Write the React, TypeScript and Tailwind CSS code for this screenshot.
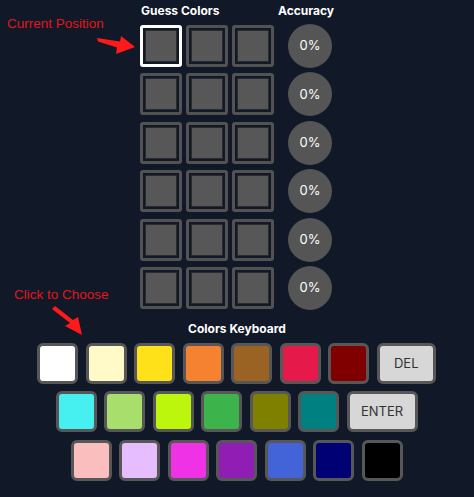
const ROWS = 6;
const COLS = 3;

const keyRows: string[][] = [
  ["#ffffff", "#fffac8", "#ffe119", "#f58231", "#9a6324", "#e6194b", "#800000", "DEL"],
  ["#46f0f0", "#a8de6c", "#bcf60c", "#3cb44b", "#808000", "#008080", "ENTER"],
  ["#fabebe", "#e6beff", "#f032e6", "#911eb4", "#4363d8", "#000075", "#000000"],
];

function GuessCell({ active }: { active: boolean }) {
  return (
    <div
      className={`w-[42px] h-[42px] rounded-[3px] border-[3px] p-[3px] ${
        active ? "border-white" : "border-[#525252]"
      }`}
    >
      <div className="w-full h-full bg-[#575757] shadow-[0_0_0_1px_#2b2b2b]" />
    </div>
  );
}

function Key({ value }: { value: string }) {
  if (value === "DEL" || value === "ENTER") {
    return (
      <button
        className={`h-[41px] ${
          value === "DEL" ? "w-[59px]" : "w-[71px]"
        } rounded-[6px] border-[3px] border-[#575757] bg-[#d7d7d7] text-[13px] text-[#333333] flex items-center justify-center`}
      >
        {value}
      </button>
    );
  }
  return (
    <button
      className="w-[41px] h-[41px] rounded-[6px] border-[3px] border-[#575757]"
      style={{ backgroundColor: value }}
    />
  );
}

export default function App() {
  return (
    <div
      className="relative w-[474px] h-[497px] bg-[#111827] overflow-hidden"
      style={{ fontFamily: "Inter, 'Liberation Sans', sans-serif" }}
    >
      <div className="flex flex-col items-center pt-[3px]">
        {/* guess board */}
        <div className="flex gap-[14px] ml-[-2px]">
          <div className="flex flex-col w-[134px]">
            <div className="h-4 text-[12px] leading-4 font-bold text-white pl-[1px]">Guess Colors</div>
            <div className="flex flex-col gap-[4.4px] mt-[5px]">
              {Array.from({ length: ROWS }).map((_, r) => (
                <div key={r} className="h-[44px] flex items-center gap-[4px]">
                  {Array.from({ length: COLS }).map((_, c) => (
                    <GuessCell key={c} active={r === 0 && c === 0} />
                  ))}
                </div>
              ))}
            </div>
          </div>
          <div className="flex flex-col w-[44px]">
            <div className="h-4 flex justify-center pr-2 text-[12px] leading-4 font-bold text-white whitespace-nowrap">
              Accuracy
            </div>
            <div className="flex flex-col gap-[4.4px] mt-[5px]">
              {Array.from({ length: ROWS }).map((_, r) => (
                <div
                  key={r}
                  className="w-[44px] h-[44px] rounded-full bg-[#555555] text-white text-[13px] flex items-center justify-center"
                >
                  0%
                </div>
              ))}
            </div>
          </div>
        </div>

        {/* colour keyboard */}
        <div className="mt-[11px] h-4 text-[12px] leading-4 font-bold text-white">Colors Keyboard</div>
        <div className="mt-[6px] flex flex-col items-center gap-[7.5px] ml-[-1px]">
          {keyRows.map((row, i) => (
            <div key={i} className="flex gap-[7.5px]">
              {row.map((v) => (
                <Key key={v} value={v} />
              ))}
            </div>
          ))}
        </div>
      </div>

      {/* hints */}
      <div
        className="absolute left-[7px] top-[16.5px] text-[13.5px] leading-none text-[#e3161b]"
        style={{ fontFamily: "'Liberation Sans', Arial, sans-serif" }}
      >
        Current Position
      </div>
      <div
        className="absolute left-[14px] top-[287.5px] text-[13.5px] leading-none text-[#e3161b]"
        style={{ fontFamily: "'Liberation Sans', Arial, sans-serif" }}
      >
        Click to Choose
      </div>
      <svg className="absolute left-0 top-0 pointer-events-none" width="474" height="497">
        <polygon points="97,38 120,41.5 121,36 135,47 116,54 117,47.5 98,41.5" fill="#ff1a1a" />
        <polygon points="52,309 55,306 73,320 78,317 82,335 65,326 70,323" fill="#ff1a1a" />
      </svg>
    </div>
  );
}
